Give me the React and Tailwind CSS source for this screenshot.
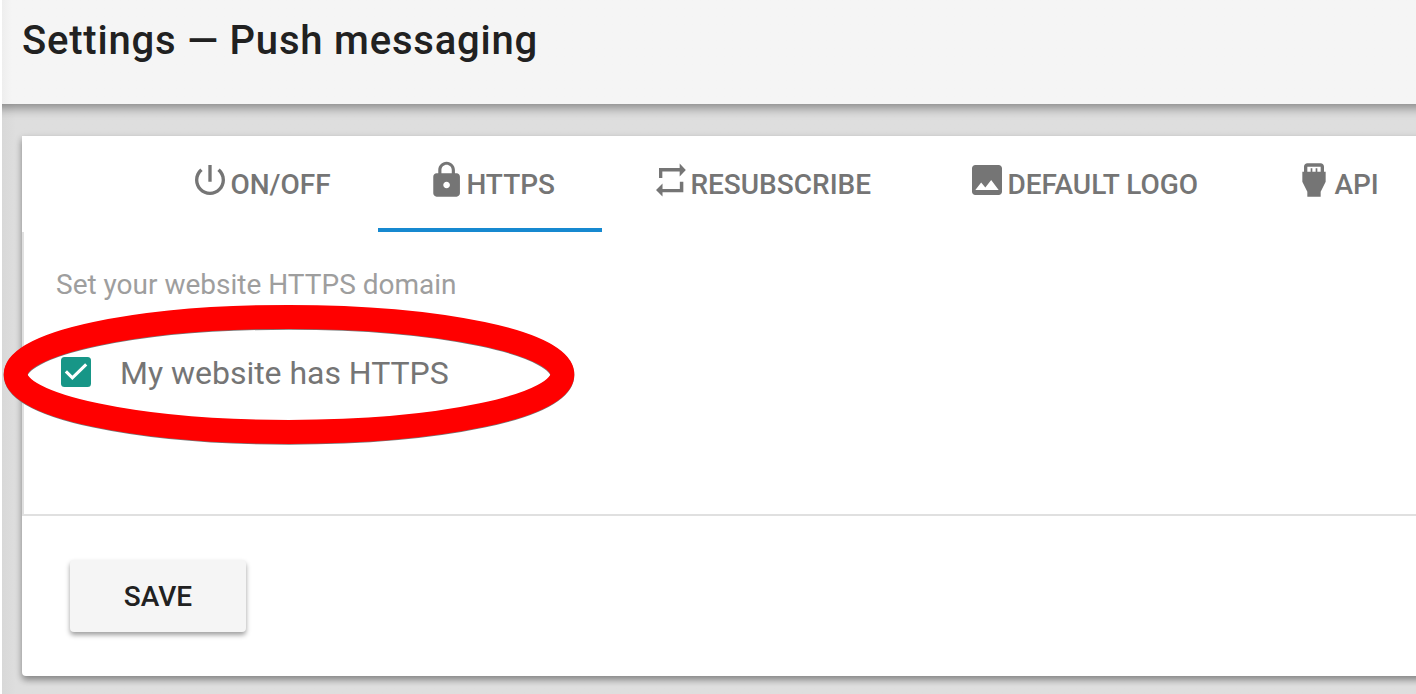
import React from 'react';

const icons = {
  power: 'M13 3h-2v10h2V3zm4.83 2.17l-1.42 1.42C17.99 7.86 19 9.81 19 12c0 3.87-3.13 7-7 7s-7-3.13-7-7c0-2.19 1.01-4.14 2.58-5.42L6.17 5.17C4.23 6.82 3 9.26 3 12c0 4.97 4.03 9 9 9s9-4.03 9-9c0-2.74-1.23-5.18-3.17-6.83z',
  lock: 'M18 8h-1V6c0-2.76-2.24-5-5-5S7 3.24 7 6v2H6c-1.1 0-2 .9-2 2v10c0 1.1.9 2 2 2h12c1.1 0 2-.9 2-2V10c0-1.1-.9-2-2-2zm-6 9c-1.1 0-2-.9-2-2s.9-2 2-2 2 .9 2 2-.9 2-2 2zm3.1-9H8.9V6c0-1.71 1.39-3.1 3.1-3.1 1.71 0 3.1 1.39 3.1 3.1v2z',
  repeat: 'M5.4 4.8H17.8V2.1L21.5 6L17.8 9.9V6.9H7.4V10.8H5.4zM20 19.4H7.5V21.9L3.6 18L7.5 14.1V17.4H17.9V13H20z',
  image: 'M21 19V5c0-1.1-.9-2-2-2H5c-1.1 0-2 .9-2 2v14c0 1.1.9 2 2 2h14c1.1 0 2-.9 2-2zM8.5 13.5l2.5 3.01L14.5 12l4.5 6H5l3.5-4.5z',
  hdmi: 'M18 7V4c0-1.1-.9-2-2-2H8c-1.1 0-2 .9-2 2v3H5v6l3 6v3h8v-3l3-6V7h-1zM8 4h8v3h-2V5h-1v2h-2V5h-1v2H8V4z',
};

const tabs = [
  { label: 'ON/OFF', icon: icons.power, width: 'w-[236px]' },
  { label: 'HTTPS', icon: icons.lock, width: 'w-[224px]', nudge: 'translate-x-[0.6px]', active: true },
  { label: 'RESUBSCRIBE', icon: icons.repeat, width: 'w-[317px]' },
  { label: 'DEFAULT LOGO', icon: icons.image, width: 'w-[327px]' },
  { label: 'API', icon: icons.hdmi, width: 'w-[180px]' },
];

const Tab = ({ label, icon, width, nudge = '', active }) => (
  <button
    className={`flex h-24 shrink-0 items-start border-b-4 pt-6 pl-12 text-[28px] font-medium text-[#757575] ${width} ${
      active ? 'border-[#1689d0]' : 'border-transparent'
    }`}
  >
    <svg viewBox="0 0 24 24" className={`size-10 shrink-0 ${nudge}`} fill="currentColor">
      <path d={icon} fillRule="evenodd" />
    </svg>
    <span className="pl-[0.4px] leading-[50px] whitespace-nowrap">{label}</span>
  </button>
);

const App = () => {
  return (
    <div className="h-[694px] bg-white pl-0.5 font-['Roboto','Liberation_Sans',sans-serif]">
      <div className="flex h-full flex-col overflow-hidden bg-[#dedede] bg-linear-to-r from-[#d8d8d8] to-[#dedede] to-[14px]">

        {/* Header */}
        <header className="relative -mx-5 h-[104px] shrink-0 bg-[#f5f5f5] bg-linear-to-r from-[#eeeeee] from-[20px] to-[#f5f5f5] to-[30px] pt-[17px] pl-10 shadow-[0_4px_10px_rgba(0,0,0,0.4)]">
          <h1 className="text-[40px] leading-[48px] font-medium tracking-[0.8px] whitespace-nowrap text-[#212121]">
            Settings — Push messaging
          </h1>
        </header>

        {/* Settings card, runs past the right edge */}
        <main className="relative mt-8 -mr-5 ml-5 h-[540px] shrink-0 rounded-b bg-white shadow-[0_4px_6px_rgba(0,0,0,0.34),0_2px_10px_rgba(0,0,0,0.1)]">
          <nav className="flex pl-[120px]">
            {tabs.map((tab) => (
              <Tab key={tab.label} {...tab} />
            ))}
          </nav>

          <section className="relative h-[284px] border-b-2 border-l-2 border-[#e0e0e0] pt-[33px] pl-8">
            <p className="text-[28px] leading-10 text-[#9e9e9e]">Set your website HTTPS domain</p>

            <label className="mt-[52px] ml-[5px] flex h-[30px] items-center text-[#757575]">
              <svg viewBox="0 0 30 30" className="size-[30px]" fill="none">
                <rect width="30" height="30" rx="3.5" fill="#179687" />
                <path d="M4.9 14.3L11.4 20.8L25.2 7.3" stroke="#fff" strokeWidth="3.1" />
              </svg>
              <span className="mt-0.5 ml-[29px] text-[32px] leading-10 tracking-[-0.02px] whitespace-nowrap">
                My website has HTTPS
              </span>
            </label>

            {/* Hand-drawn highlight over the checkbox */}
            <svg
              viewBox="0 0 576 144"
              className="pointer-events-none absolute top-[71px] -left-[23px] h-36 w-[576px]"
              fill="none"
              strokeWidth="24"
            >
              <ellipse cx="288" cy="72.2" rx="273.3" ry="57.5" stroke="#777" />
              <ellipse cx="288" cy="71.4" rx="273.3" ry="57.5" stroke="#f00" />
            </svg>
          </section>

          <div className="pt-11 pl-12">
            <button className="h-[72px] w-[176px] rounded bg-[#f5f5f5] pt-0.5 text-[28px] font-medium text-[#212121] shadow-[0_3px_5px_rgba(0,0,0,0.38)]">
              SAVE
            </button>
          </div>
        </main>
      </div>
    </div>
  );
};

export default App;
